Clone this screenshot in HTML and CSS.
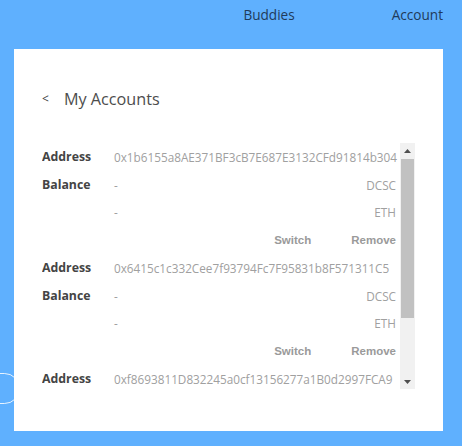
FILE: index.html
```html
<!DOCTYPE html>
<html>
<head>
<meta charset="utf-8">
<link rel="stylesheet" href="styles.css">
</head>
<body>
<nav class="nav">
  <a class="nav-item">Buddies</a>
  <a class="nav-item">Account</a>
</nav>
<div class="ghost-btn"></div>
<main class="card">
  <h1 class="title"><span class="back">&lt;</span>My Accounts</h1>
  <div class="list-wrap">
    <div class="list">
      <div class="account">
        <div class="row"><span class="label">Address</span><span class="value">0x1b6155a8AE371BF3cB7E687E3132CFd91814b304</span></div>
        <div class="row"><span class="label">Balance</span><span class="value">-</span><span class="unit">DCSC</span></div>
        <div class="row"><span class="label"></span><span class="value">-</span><span class="unit">ETH</span></div>
        <div class="row actions"><span class="action">Switch</span><span class="action">Remove</span></div>
      </div>
      <div class="account">
        <div class="row"><span class="label">Address</span><span class="value">0x6415c1c332Cee7f93794Fc7F95831b8F571311C5</span></div>
        <div class="row"><span class="label">Balance</span><span class="value">-</span><span class="unit">DCSC</span></div>
        <div class="row"><span class="label"></span><span class="value">-</span><span class="unit">ETH</span></div>
        <div class="row actions"><span class="action">Switch</span><span class="action">Remove</span></div>
      </div>
      <div class="account">
        <div class="row"><span class="label">Address</span><span class="value">0xf8693811D832245a0cf13156277a1B0d2997FCA9</span></div>
      </div>
    </div>
    <div class="scrollbar">
      <div class="sb-btn"><svg width="7" height="4" viewBox="0 0 7 4"><path d="M0 4 L3.5 0 L7 4 Z" fill="#505050"/></svg></div>
      <div class="sb-track"><div class="sb-thumb"></div></div>
      <div class="sb-btn"><svg width="7" height="4" viewBox="0 0 7 4"><path d="M0 0 L3.5 4 L7 0 Z" fill="#505050"/></svg></div>
    </div>
  </div>
</main>
</body>
</html>
```
FILE: styles.css
```css
* { box-sizing: border-box; }
html, body { margin: 0; padding: 0; }
body {
  background: #5fb0fe;
  font-family: "Open Sans", "Liberation Sans", sans-serif;
  width: 462px;
  height: 446px;
  overflow: hidden;
  position: relative;
}
.nav {
  display: flex;
  justify-content: flex-end;
  height: 30px;
  line-height: 30px;
  padding-right: 19px;
  gap: 97px;
}
.nav-item {
  font-size: 13.6px;
  color: #1f3b5a;
}
.ghost-btn {
  position: absolute;
  left: -30px;
  top: 373px;
  width: 50px;
  height: 31px;
  border: 1px solid rgba(255,255,255,0.85);
  border-radius: 16px;
}
.card {
  position: relative;
  margin: 19px 19px 0 14px;
  height: 382px;
  background: #fff;
  padding: 38px 28px 42px 28px;
}
.title {
  margin: 0 0 32px 0;
  font-size: 16.2px;
  font-weight: 400;
  line-height: 24px;
  color: #4d4d4d;
  display: flex;
  align-items: center;
}
.back {
  font-size: 12px;
  width: 22px;
  color: #444;
}
.list-wrap {
  display: flex;
  height: 246px;
}
.list {
  flex: 1;
  min-width: 0;
  overflow: hidden;
}
.account {
  display: flex;
  flex-direction: column;
}
.row {
  display: flex;
  align-items: center;
  height: 27.75px;
  padding-right: 4px;
  font-size: 11.75px;
}
.label {
  width: 72px;
  flex: none;
  font-weight: 700;
  font-size: 12.3px;
  color: #444;
}
.value {
  flex: 1;
  color: #a0a0a0;
  white-space: nowrap;
}
.unit {
  color: #a0a0a0;
}
.actions {
  justify-content: flex-end;
  gap: 40px;
}
.action {
  font-family: "Liberation Sans", Arial, sans-serif;
  font-weight: 700;
  font-size: 11.5px;
  color: #9a9a9a;
}
.scrollbar {
  width: 15px;
  flex: none;
  display: flex;
  flex-direction: column;
  background: #f1f1f1;
}
.sb-btn {
  height: 15px;
  display: flex;
  align-items: center;
  justify-content: center;
}
.sb-track {
  flex: 1;
  padding: 1px 1px 0 1px;
}
.sb-thumb {
  height: 159px;
  background: #c1c1c1;
}
```
